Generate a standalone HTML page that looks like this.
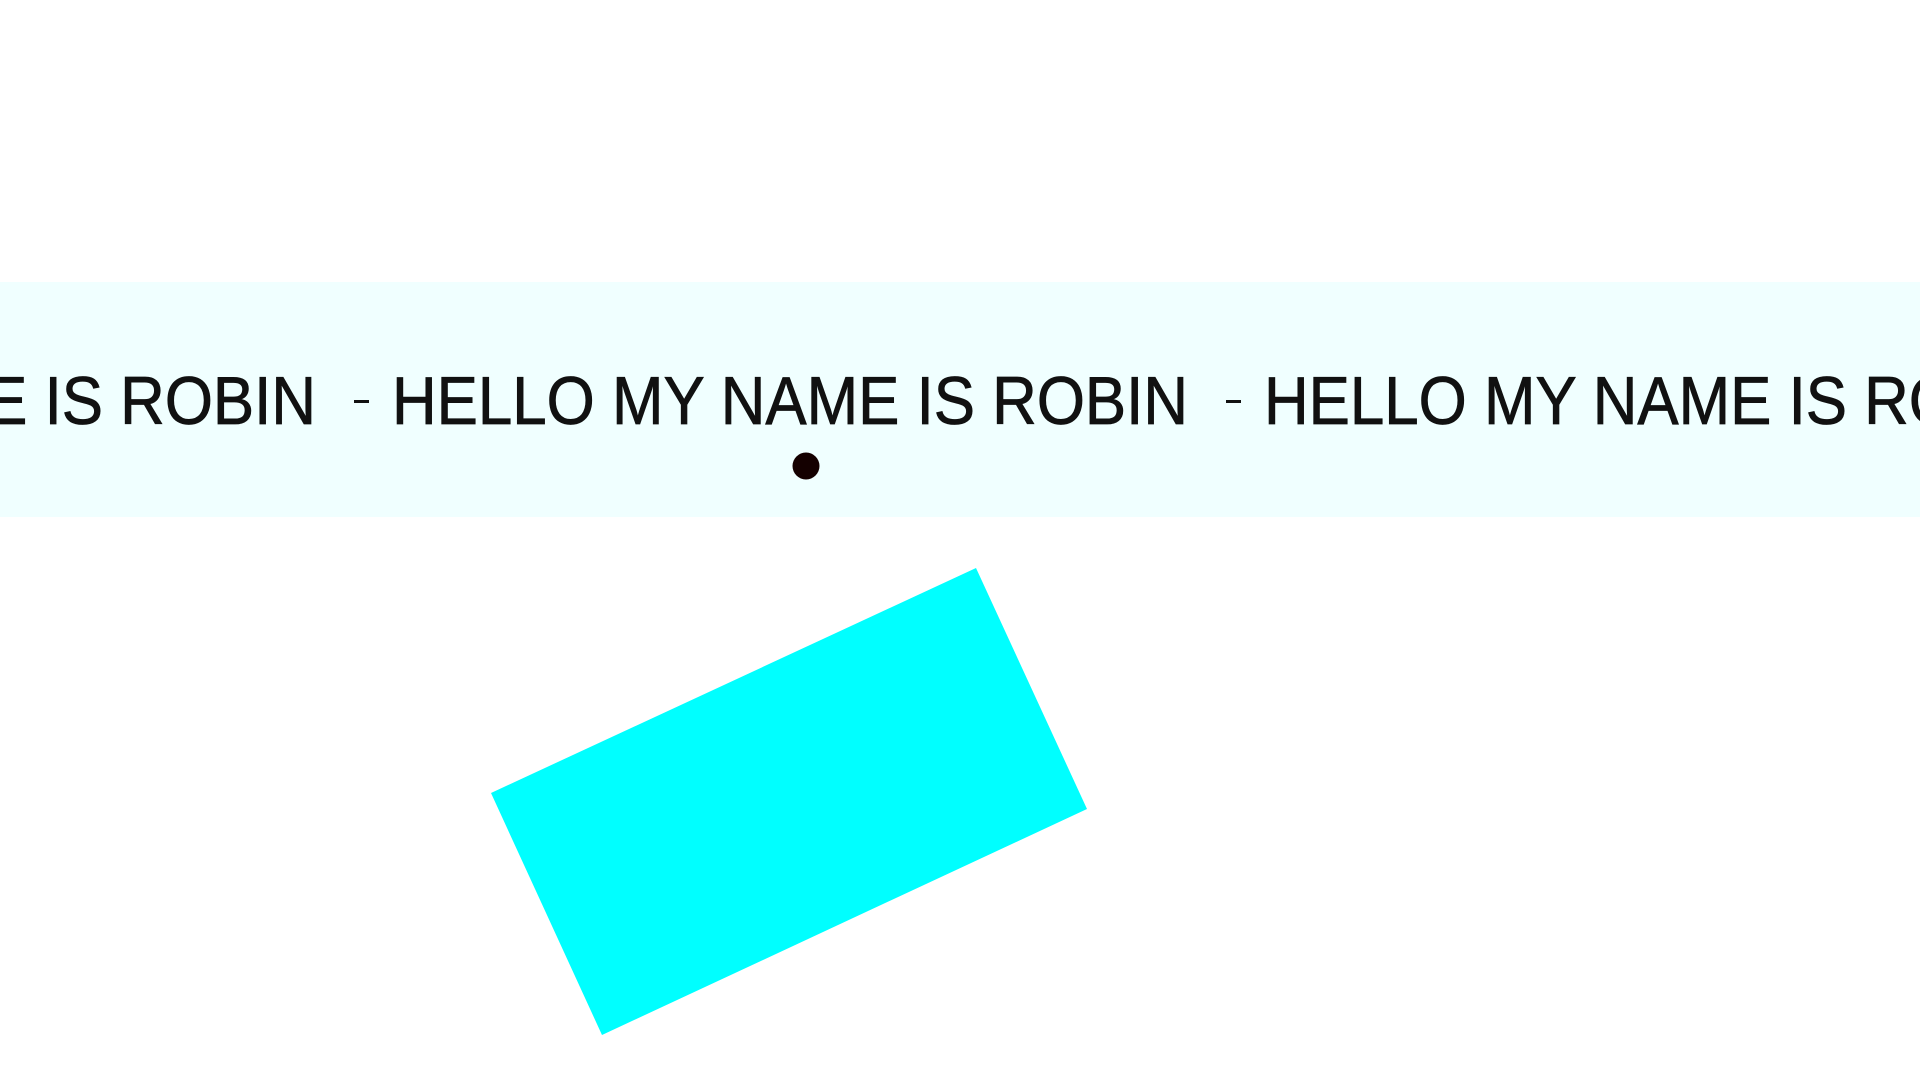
<!DOCTYPE html>
<html><head><meta charset="utf-8"><style>
html,body{margin:0;padding:0;background:#fff;width:1920px;height:1080px;overflow:hidden}
</style></head><body>
<svg width="1920" height="1080" viewBox="0 0 1920 1080" xmlns="http://www.w3.org/2000/svg">
<rect x="0" y="282" width="1920" height="235" fill="#f0ffff"/>
<g font-family="Liberation Sans, sans-serif" font-size="68" fill="#111" stroke="#111" stroke-width="0.8">
<text x="-480" y="424" textLength="796" lengthAdjust="spacingAndGlyphs">HELLO MY NAME IS ROBIN</text>
<text x="392" y="424" textLength="796" lengthAdjust="spacingAndGlyphs">HELLO MY NAME IS ROBIN</text>
<text x="1264" y="424" textLength="796" lengthAdjust="spacingAndGlyphs">HELLO MY NAME IS ROBIN</text>
</g>
<rect x="354" y="400" width="15" height="3" fill="#111"/>
<rect x="1226" y="400" width="15" height="3" fill="#111"/>
<circle cx="806" cy="466" r="13.5" fill="#140000"/>
<polygon points="976,568 1087,809 602,1035 491,793" fill="#00ffff"/>
</svg>
</body></html>
